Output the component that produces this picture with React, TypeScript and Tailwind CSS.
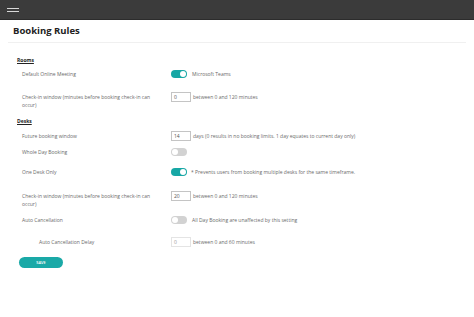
import React from 'react';

function Toggle({ on }: { on: boolean }) {
  return (
    <div
      className={`w-[16px] h-[8px] rounded-full flex items-center px-[1px] ${
        on ? 'bg-[#17a7a5] justify-end' : 'bg-[#d2d2d2] justify-start'
      }`}
    >
      <div className="w-[6px] h-[6px] rounded-full bg-white" />
    </div>
  );
}

function NumInput({ value, muted }: { value: string; muted?: boolean }) {
  return (
    <div
      className={`w-[20px] h-[10px] border flex items-center pl-[2px] text-[5px] ${
        muted ? 'border-[#e4e4e4] text-[#999]' : 'border-[#c4c4c4] text-[#555]'
      }`}
    >
      {value}
    </div>
  );
}

export default function App() {
  return (
    <div
      className="w-[474px] h-[317px] bg-white overflow-hidden flex flex-col"
      style={{ fontFamily: '"Open Sans", "Noto Sans", sans-serif' }}
    >
      {/* Top bar */}
      <div className="h-[20px] bg-[#3b3b3b] border-b border-[#2c2c2c] flex items-center pl-[7px] shrink-0">
        <div className="flex flex-col gap-[2px]">
          <div className="w-[12px] h-[1px] bg-[#d8d8d8]" />
          <div className="w-[12px] h-[1px] bg-[#d8d8d8]" />
        </div>
      </div>

      {/* Title */}
      <div className="h-[23px] mx-[8px] border-b border-[#f0f0f0] flex items-center pl-[5px] pt-[1px]">
        <h1 className="text-[9.5px] font-bold text-[#222]">Booking Rules</h1>
      </div>

      <div className="flex flex-col text-[5px] text-[#6a6a6a] leading-[8px]">
        {/* Rooms */}
        <div className="mt-[13px] h-[8px] pl-[17px] flex items-center">
          <span className="font-bold text-[#222] underline">Rooms</span>
        </div>

        <div className="mt-[5px] h-[10px] pl-[22px] flex items-center">
          <div className="w-[149px]">Default Online Meeting</div>
          <div className="flex items-center gap-[5px]">
            <Toggle on />
            <span>Microsoft Teams</span>
          </div>
        </div>

        <div className="mt-[13px] h-[16px] pl-[22px] flex items-start">
          <div className="w-[149px] pt-[1px]">
            Check-in window (minutes before booking check-in can
            <br />
            occur)
          </div>
          <div className="flex items-center gap-[2px]">
            <NumInput value="0" />
            <span>between 0 and 120 minutes</span>
          </div>
        </div>

        {/* Desks */}
        <div className="mt-[9px] h-[8px] pl-[17px] flex items-center">
          <span className="font-bold text-[#222] underline">Desks</span>
        </div>

        <div className="mt-[6px] h-[10px] pl-[22px] flex items-center">
          <div className="w-[149px]">Future booking window</div>
          <div className="flex items-center gap-[2px]">
            <NumInput value="14" />
            <span>days (0 results in no booking limits. 1 day equates to current day only)</span>
          </div>
        </div>

        <div className="mt-[6px] h-[10px] pl-[22px] flex items-center">
          <div className="w-[149px]">Whole Day Booking</div>
          <Toggle on={false} />
        </div>

        <div className="mt-[10px] h-[10px] pl-[22px] flex items-center">
          <div className="w-[149px]">One Desk Only</div>
          <div className="flex items-center gap-[4px]">
            <Toggle on />
            <span>* Prevents users from booking multiple desks for the same timeframe.</span>
          </div>
        </div>

        <div className="mt-[14px] h-[16px] pl-[22px] flex items-start">
          <div className="w-[149px] pt-[1px]">
            Check-in window (minutes before booking check-in can
            <br />
            occur)
          </div>
          <div className="flex items-center gap-[2px]">
            <NumInput value="20" />
            <span>between 0 and 120 minutes</span>
          </div>
        </div>

        <div className="mt-[8px] h-[10px] pl-[22px] flex items-center">
          <div className="w-[149px]">Auto Cancellation</div>
          <div className="flex items-center gap-[5px]">
            <Toggle on={false} />
            <span>All Day Booking are unaffected by this setting</span>
          </div>
        </div>

        <div className="mt-[12px] h-[10px] pl-[22px] flex items-center">
          <div className="w-[149px] pl-[17px]">Auto Cancellation Delay</div>
          <div className="flex items-center gap-[2px]">
            <NumInput value="0" muted />
            <span>between 0 and 60 minutes</span>
          </div>
        </div>

        <div className="mt-[10px] pl-[19px]">
          <button className="w-[44px] h-[11px] rounded-full bg-[#1aa9a7] text-white text-[4px] font-semibold flex items-center justify-center">
            SAVE
          </button>
        </div>
      </div>
    </div>
  );
}
